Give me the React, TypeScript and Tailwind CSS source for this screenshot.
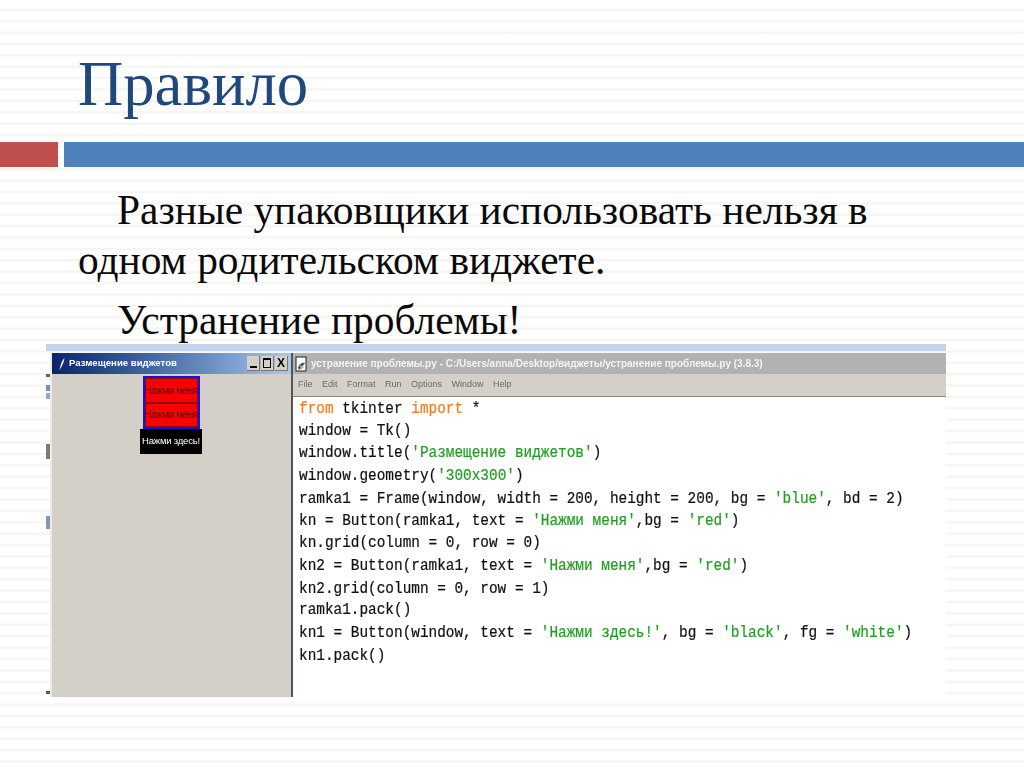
const codeLines = [
  [["from", "o"], [" tkinter ", "k"], ["import", "o"], [" *", "k"]],
  [["window = Tk()", "k"]],
  [["window.title(", "k"], ["'Размещение виджетов'", "g"], [")", "k"]],
  [["window.geometry(", "k"], ["'300x300'", "g"], [")", "k"]],
  [["ramka1 = Frame(window, width = 200, height = 200, bg = ", "k"], ["'blue'", "g"], [", bd = 2)", "k"]],
  [["kn = Button(ramka1, text = ", "k"], ["'Нажми меня'", "g"], [",bg = ", "k"], ["'red'", "g"], [")", "k"]],
  [["kn.grid(column = 0, row = 0)", "k"]],
  [["kn2 = Button(ramka1, text = ", "k"], ["'Нажми меня'", "g"], [",bg = ", "k"], ["'red'", "g"], [")", "k"]],
  [["kn2.grid(column = 0, row = 1)", "k"]],
  [["ramka1.pack()", "k"]],
  [["kn1 = Button(window, text = ", "k"], ["'Нажми здесь!'", "g"], [", bg = ", "k"], ["'black'", "g"], [", fg = ", "k"], ["'white'", "g"], [")", "k"]],
  [["kn1.pack()", "k"]],
];

const menuItems = ["File", "Edit", "Format", "Run", "Options", "Window", "Help"];

function tokenClass(kind: string) {
  if (kind === "o") return "text-[#f57c1f]";
  if (kind === "g") return "text-[#1f9f1f]";
  return "text-[#111]";
}

function RedButton() {
  return (
    <div className="flex h-[24.5px] w-[53px] items-center justify-center border border-[#8a1010] bg-[#fb0000] text-[10px] tracking-[-0.45px] whitespace-nowrap text-[#5a0000]">
      Нажми меня
    </div>
  );
}

function WinControl({ children }: { children: React.ReactNode }) {
  return (
    <div className="flex h-[15px] w-[13px] items-center justify-center border-r border-b border-[#7a7870] bg-[#d4d0c8] text-[12px] leading-none font-bold text-black">
      {children}
    </div>
  );
}

function TkWindow() {
  return (
    <div className="flex h-full w-[241px] shrink-0 flex-col border-l-2 border-[#ecebe6] bg-[#d4d0c8]">
      <div className="flex h-[21px] items-center bg-gradient-to-r from-[#0a246a] to-[#a6caf0] pr-[3px] pl-[6px]">
        <svg width="8" height="14" viewBox="0 0 8 14" className="shrink-0">
          <path d="M6.5 1C4 3 2.5 7 1.5 13C3.5 10 6 6 6.5 1Z" fill="#e8eef8" />
        </svg>
        <span className="ml-[3px] flex-1 text-[9.6px] font-bold whitespace-nowrap text-white">
          Размещение виджетов
        </span>
        <div className="flex gap-[1px]">
          <WinControl>
            <span className="mt-[8px] h-[2px] w-[7px] bg-black" />
          </WinControl>
          <WinControl>
            <span className="h-[10px] w-[8px] border border-t-2 border-black" />
          </WinControl>
          <WinControl>X</WinControl>
        </div>
      </div>
      <div className="flex flex-col items-center pr-[1px]">
        <div className="mt-[2px] flex flex-col border-2 border-[#1a10e0] bg-[#1a10e0]">
          <RedButton />
          <RedButton />
        </div>
        <div className="flex h-[25px] w-[62px] items-center justify-center bg-black text-[9.5px] tracking-[-0.2px] whitespace-nowrap text-white">
          Нажми здесь!
        </div>
      </div>
    </div>
  );
}

function IdleWindow() {
  return (
    <div className="flex h-full min-w-0 flex-1 flex-col border-l-2 border-[#555] bg-white">
      <div className="flex h-[21px] items-center gap-[3px] bg-[#b2b2b2] pl-[2px]">
        <svg width="13" height="16" viewBox="0 0 13 16" className="shrink-0">
          <rect x="1" y="1" width="10" height="14" fill="#fff" stroke="#222" />
          <path d="M3 12C4 8 7 6 10 7C8 9 7 12 4 14Z" fill="#2a55a5" />
          <path d="M5 9L9 11L6 14Z" fill="#e5b820" />
        </svg>
        <span className="truncate text-[10px] font-bold text-[#f4f4f4]">
          устранение проблемы.py - C:/Users/anna/Desktop/виджеты/устранение проблемы.py (3.8.3)
        </span>
      </div>
      <div className="flex h-[23px] items-center gap-[9.5px] border-b border-[#8a8a84] bg-[#d4d0c8] pl-[5px] text-[9px] text-[#6a6a66]">
        {menuItems.map((item) => (
          <span key={item}>{item}</span>
        ))}
      </div>
      <div className="origin-top-left scale-y-[1.2] pl-[6px] font-['Liberation_Mono',monospace] text-[14.4px] leading-[18.71px] whitespace-pre [-webkit-text-stroke:0.2px]">
        {codeLines.map((line, i) => (
          <div key={i}>
            {line.map(([text, kind], j) => (
              <span key={j} className={tokenClass(kind)}>
                {text}
              </span>
            ))}
          </div>
        ))}
      </div>
    </div>
  );
}

// scraps of the desktop behind the windows, on the left edge of the shot
function EdgeMarks() {
  return (
    <div className="flex w-[4px] shrink-0 flex-col">
      <div className="mt-[21px] h-[3px] bg-[#5a6472]" />
      <div className="mt-[8px] h-[6px] bg-[#6f8fc4]" />
      <div className="mt-[2px] h-[6px] bg-[#9aa6ba]" />
      <div className="mt-[45px] h-[15px] bg-[#7b7b78]" />
      <div className="mt-[57px] h-[13px] bg-[#8397b6]" />
      <div className="mt-[162px] h-[3px] bg-[#4f5866]" />
    </div>
  );
}

export default function App() {
  return (
    <main className="h-[767px] w-[1024px] overflow-hidden bg-[repeating-linear-gradient(to_bottom,#ffffff_0px,#ffffff_8px,#f5f5f2_9px,#f5f5f2_10.5px,#ffffff_11.39px)] font-['Liberation_Sans',sans-serif]">
      <header className="pt-[48px] pl-[78px] font-['Liberation_Serif',serif] text-[62.7px] leading-[72px] text-[#1f497d]">
        Правило
      </header>
      <div className="mt-[22px] flex h-[25px] gap-[6px]">
        <div className="w-[58px] bg-[#c0504d]" />
        <div className="flex-1 bg-[#4f81bd]" />
      </div>
      <section className="pt-[18px] pl-[78px] font-['Liberation_Serif',serif] text-[41.4px] leading-[50px] text-[#0a0a0a]">
        <p className="indent-[39px]">Разные упаковщики использовать нельзя в</p>
        <p>одном родительском виджете.</p>
        <p className="mt-[10px] h-[49px] indent-[39px]">Устранение проблемы!</p>
      </section>
      <div className="ml-[46px] flex h-[353px] w-[900px] flex-col blur-[0.35px]">
        <div className="h-[7px] shrink-0 bg-[#c3d5ec]" />
        <div className="flex min-h-0 flex-1 pt-[2px]">
          <EdgeMarks />
          <TkWindow />
          <IdleWindow />
        </div>
      </div>
    </main>
  );
}
